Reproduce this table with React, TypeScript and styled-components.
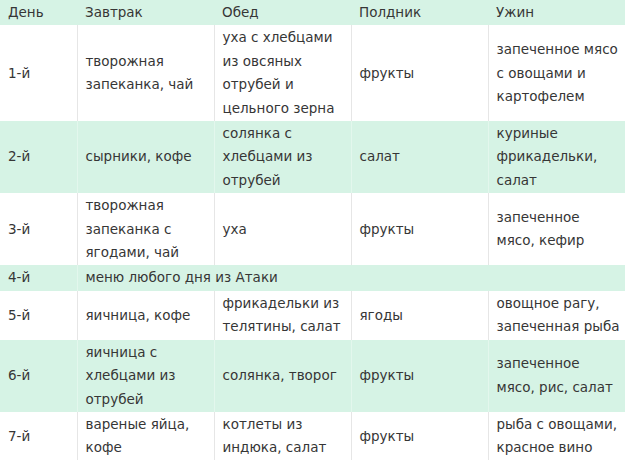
import styled, { createGlobalStyle } from "styled-components"

type DayRow = {
    day: string
    meals: string[][]
    wide?: boolean
}

const columns = ["День", "Завтрак", "Обед", "Полдник", "Ужин"]
const widths = [77, 137, 137, 137, 137]

const rows: DayRow[] = [
    {
        day: "1-й",
        meals: [
            ["творожная", "запеканка, чай"],
            ["уха с хлебцами", "из овсяных", "отрубей и", "цельного зерна"],
            ["фрукты"],
            ["запеченное мясо", "с овощами и", "картофелем"],
        ],
    },
    {
        day: "2-й",
        meals: [
            ["сырники, кофе"],
            ["солянка с", "хлебцами из", "отрубей"],
            ["салат"],
            ["куриные", "фрикадельки,", "салат"],
        ],
    },
    {
        day: "3-й",
        meals: [
            ["творожная", "запеканка с", "ягодами, чай"],
            ["уха"],
            ["фрукты"],
            ["запеченное", "мясо, кефир"],
        ],
    },
    { day: "4-й", meals: [["меню любого дня из Атаки"]], wide: true },
    {
        day: "5-й",
        meals: [
            ["яичница, кофе"],
            ["фрикадельки из", "телятины, салат"],
            ["ягоды"],
            ["овощное рагу,", "запеченная рыба"],
        ],
    },
    {
        day: "6-й",
        meals: [
            ["яичница с", "хлебцами из", "отрубей"],
            ["солянка, творог"],
            ["фрукты"],
            ["запеченное", "мясо, рис, салат"],
        ],
    },
    {
        day: "7-й",
        meals: [
            ["вареные яйца,", "кофе"],
            ["котлеты из", "индюка, салат"],
            ["фрукты"],
            ["рыба с овощами,", "красное вино"],
        ],
    },
]

export default function App() {
    return (
        <>
            <GlobalStyle />
            <Wrapper>
                <MenuTable>
                    <colgroup>
                        {widths.map((w, i) => <col key={i} style={{ width: w }} />)}
                    </colgroup>
                    <thead>
                        <Row $green>
                            {columns.map((c) => <HeadCell key={c}>{c}</HeadCell>)}
                        </Row>
                    </thead>
                    <tbody>
                        {rows.map((row, i) => {
                            const green = i % 2 === 1
                            return (
                                <Row key={row.day} $green={green}>
                                    <Cell $green={green}>{row.day}</Cell>
                                    {row.meals.map((lines, j) => (
                                        <Cell
                                            key={j}
                                            $green={green}
                                            colSpan={row.wide ? 4 : undefined}
                                        >
                                            {lines.map((l, k) => <Line key={k}>{l}</Line>)}
                                        </Cell>
                                    ))}
                                </Row>
                            )
                        })}
                    </tbody>
                </MenuTable>
            </Wrapper>
        </>
    )
}

const GlobalStyle = createGlobalStyle`
    html, body {
        margin: 0;
        padding: 0;
        background: #ffffff;
    }
`

const Wrapper = styled.div`
    width: 625px;
    height: 460px;
    overflow: hidden;
`

const MenuTable = styled.table`
    width: 625px;
    table-layout: fixed;
    border-collapse: collapse;
    font-family: "DejaVu Sans", Verdana, sans-serif;
    font-size: 13.5px;
    line-height: 23.4px;
    color: #363636;
`

const Row = styled.tr<{ $green?: boolean }>`
    background: ${(p) => (p.$green ? "#d6f3e5" : "#ffffff")};
`

const Cell = styled.td<{ $green?: boolean }>`
    padding: 1px 0 1px 8px;
    vertical-align: middle;
    text-align: left;
    border-left: 1px solid ${(p) => (p.$green ? "#e3f7ed" : "#e6e6e6")};
    &:first-child {
        border-left: none;
    }
`

const HeadCell = styled.th`
    padding: 1px 0 1px 8px;
    font-weight: 400;
    text-align: left;
    vertical-align: middle;
`

const Line = styled.span`
    display: block;
    white-space: nowrap;
`
